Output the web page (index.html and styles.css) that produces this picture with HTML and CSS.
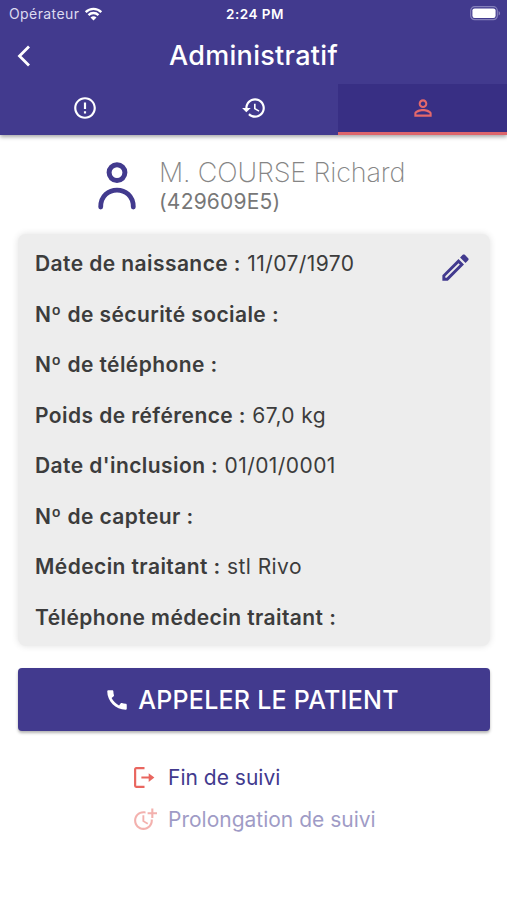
FILE: index.html
```html
<!DOCTYPE html>
<html lang="fr">
<head>
<meta charset="UTF-8">
<meta name="viewport" content="width=device-width, initial-scale=1.0">
<title>Administratif</title>
<link rel="stylesheet" href="styles.css">
</head>
<body>
  <header class="header">
    <div class="status-bar">
      <div class="carrier">
        <span class="carrier-name">Opérateur</span>
        <svg class="wifi" viewBox="0 0 18 14">
          <path d="M1.2 5.1a11 11 0 0 1 15.6 0M4 8.1a7 7 0 0 1 10 0" fill="none" stroke="#fff" stroke-width="2.3"/>
          <path d="M9 13.6L6 10.6a4.3 4.3 0 0 1 6 0z" fill="#fff"/>
        </svg>
      </div>
      <span class="time">2:24 PM</span>
      <svg class="battery" viewBox="0 0 31 15">
        <rect x=".7" y=".7" width="26.6" height="13" rx="4" fill="none" stroke="#8580bb" stroke-width="1.2"/>
        <rect x="2.4" y="2.4" width="23.2" height="9.6" rx="2.2" fill="#fff"/>
        <path d="M28.6 5v4.6c2-.9 2-3.7 0-4.6z" fill="#8580bb"/>
      </svg>
    </div>
    <div class="title-bar">
      <a href="#" class="back">
        <svg viewBox="0 0 14 22"><path d="M12 1.5L2.5 11l9.5 9.5" fill="none" stroke="#fff" stroke-width="2.8"/></svg>
      </a>
      <h1 class="title">Administratif</h1>
    </div>
    <nav class="tabs">
      <a href="#" class="tab">
        <svg viewBox="0 0 24 24"><path d="M11 15h2v2h-2zm0-8h2v6h-2zm.99-5C6.47 2 2 6.48 2 12s4.47 10 9.99 10C17.52 22 22 17.52 22 12S17.52 2 11.99 2zM12 20c-4.42 0-8-3.58-8-8s3.58-8 8-8 8 3.58 8 8-3.58 8-8 8z"/></svg>
      </a>
      <a href="#" class="tab">
        <svg viewBox="0 0 24 24"><path d="M13 3c-4.97 0-9 4.03-9 9H1l3.89 3.89.07.14L9 12H6c0-3.87 3.13-7 7-7s7 3.13 7 7-3.13 7-7 7c-1.93 0-3.68-.79-4.94-2.06l-1.42 1.42C8.27 19.99 10.51 21 13 21c4.97 0 9-4.03 9-9s-4.03-9-9-9zm-1 5v5l4.28 2.54.72-1.21-3.5-2.08V8H12z"/></svg>
      </a>
      <a href="#" class="tab active">
        <svg viewBox="0 0 24 24"><path d="M12 5.9c1.16 0 2.1.94 2.1 2.1s-.94 2.1-2.1 2.1S9.9 9.16 9.9 8s.94-2.1 2.1-2.1m0 9c2.97 0 6.1 1.46 6.1 2.1v1.1H5.9V17c0-.64 3.13-2.1 6.1-2.1M12 4C9.79 4 8 5.79 8 8s1.79 4 4 4 4-1.79 4-4-1.79-4-4-4zm0 9c-2.67 0-8 1.34-8 4v3h16v-3c0-2.66-5.33-4-8-4z"/></svg>
      </a>
    </nav>
  </header>

  <main class="content">
    <section class="patient">
      <svg class="avatar" viewBox="0 0 38 48" fill="none" stroke="#423a8e" stroke-linecap="round">
        <circle cx="19" cy="10.6" r="7.9" stroke-width="5"/>
        <path d="M2.7 45C2.7 22.5 35.3 22.5 35.3 45" stroke-width="4.8"/>
      </svg>
      <div>
        <div class="patient-name">M. COURSE Richard</div>
        <div class="patient-id">(429609E5)</div>
      </div>
    </section>

    <section class="card">
      <a href="#" class="edit">
        <svg viewBox="0 0 24 24"><path d="M14.06 9.02l.92.92L5.92 19H5v-.92l9.06-9.06M17.66 3c-.25 0-.51.1-.7.29l-1.83 1.83 3.75 3.75 1.83-1.83c.39-.39.39-1.02 0-1.41l-2.34-2.34c-.2-.2-.45-.29-.71-.29zm-3.6 3.19L3 17.25V21h3.75L17.81 9.94l-3.75-3.75z"/></svg>
      </a>
      <p class="row"><b>Date de naissance :</b> <span>11/07/1970</span></p>
      <p class="row"><b>Nº de sécurité sociale :</b></p>
      <p class="row"><b>Nº de téléphone :</b></p>
      <p class="row"><b>Poids de référence :</b> <span>67,0 kg</span></p>
      <p class="row"><b>Date d'inclusion :</b> <span>01/01/0001</span></p>
      <p class="row"><b>Nº de capteur :</b></p>
      <p class="row"><b>Médecin traitant :</b> <span>stl Rivo</span></p>
      <p class="row"><b>Téléphone médecin traitant :</b></p>
    </section>

    <button class="call-button">
      <svg viewBox="0 0 24 24"><path d="M20.01 15.38c-1.23 0-2.42-.2-3.53-.56-.35-.12-.74-.03-1.01.24l-1.57 1.97c-2.83-1.35-5.48-3.9-6.89-6.83l1.95-1.66c.27-.28.35-.67.24-1.02-.37-1.11-.56-2.3-.56-3.53 0-.54-.45-.99-.99-.99H4.19C3.65 3 3 3.24 3 3.99 3 13.28 10.73 21 20.01 21c.71 0 .99-.63.99-1.18v-3.45c0-.54-.45-.99-.99-.99z"/></svg>
      <span>APPELER LE PATIENT</span>
    </button>

    <div class="actions">
      <a href="#" class="action">
        <svg viewBox="0 0 24 24" fill="none" stroke="#e9665f" stroke-width="2.1">
          <path d="M12 3H4a1 1 0 0 0-1 1v16a1 1 0 0 0 1 1h8M9 12h8"/>
          <path d="M16 7.8l5.500 4.200-5.500 4.200z" fill="#e9665f" stroke="none"/>
        </svg>
        <span>Fin de suivi</span>
      </a>
      <a href="#" class="action disabled">
        <svg viewBox="0 0 24 24" fill="#e9665f"><path d="M10 8v6l4.700 2.900.9-1.500-3.800-2.300V8zM17.920 12c.05.330.08.660.08 1 0 3.900-3.100 7-7 7s-7-3.100-7-7 3.100-7 7-7c.7 0 1.370.1 2 .290V4.230C12.360 4.080 11.690 4 11 4c-5 0-9 4-9 9s4 9 9 9 9-4 9-9c0-.34-.02-.67-.06-1h-2.020zM20.500 5V1.500h-2V5H15v2h3.500v3.500h2V7H24V5z"/></svg>
        <span>Prolongation de suivi</span>
      </a>
    </div>
  </main>
</body>
</html>
```
FILE: styles.css
```css
* { box-sizing: border-box; }
body {
  margin: 0;
  background: #fff;
  color: #3c3c3c;
  font-family: Inter, "Liberation Sans", sans-serif;
}
a { color: inherit; text-decoration: none; }
svg { display: block; flex: none; }

/* header */
.header {
  height: 135px;
  background: #423a8e;
  color: #fff;
  box-shadow: 0 2px 4px rgba(0,0,0,0.35);
}
.status-bar {
  display: grid;
  grid-template-columns: 1fr auto 1fr;
  align-items: center;
  height: 27px;
  padding: 0 6px 0 9px;
  font-size: 14px;
}
.carrier { display: flex; align-items: center; gap: 5px; }
.carrier-name { color: #dddaf0; letter-spacing: 0.4px; }
.wifi { width: 19px; height: 14px; }
.time {
  font-weight: 600;
  font-size: 13.5px;
  letter-spacing: 0.5px;
}
.battery { width: 31px; height: 15px; justify-self: end; }
.title-bar {
  display: grid;
  grid-template-columns: 40px 1fr 40px;
  align-items: center;
  height: 57px;
}
.back { padding-left: 17px; }
.back svg { width: 14px; height: 22px; }
.title {
  margin: 0;
  font-size: 27px;
  font-weight: 500;
  letter-spacing: 0.3px;
  text-align: center;
}
.tabs { display: flex; height: 51px; }
.tab {
  flex: 1;
  display: flex;
  align-items: center;
  justify-content: center;
  border-bottom: 3px solid transparent;
}
.tab svg { width: 26px; height: 26px; fill: #fff; }
.tab.active { background: #382f84; border-bottom-color: #dc656c; }
.tab.active svg { fill: #e4686b; }

/* patient */
.content { padding: 0 17px 0 18px; }
.patient {
  display: flex;
  gap: 23px;
  height: 99px;
  padding: 23px 0 0 80px;
}
.avatar { width: 38px; height: 48px; margin-top: 4px; }
.patient-name {
  font-size: 27px;
  font-weight: 200;
  line-height: 30px;
  letter-spacing: -0.15px;
  color: #858585;
}
.patient-id {
  font-size: 21px;
  line-height: 28px;
  letter-spacing: 0.2px;
  color: #777;
}

/* details card */
.card {
  position: relative;
  height: 412px;
  padding: 5px 17px;
  background: #ededed;
  border-radius: 8px;
  box-shadow: 0 0 7px rgba(0,0,0,0.12);
}
.row {
  margin: 0;
  height: 50.5px;
  line-height: 50.5px;
  font-size: 21px;
  letter-spacing: 0.42px;
  white-space: nowrap;
}
.row b { font-weight: 600; }
.edit { position: absolute; top: 16px; right: 17px; }
.edit svg { width: 35px; height: 35px; fill: #423a8e; }

/* buttons */
.call-button {
  display: flex;
  align-items: center;
  justify-content: center;
  gap: 8px;
  width: 100%;
  height: 63px;
  margin-top: 22px;
  padding: 0 5px 0 0;
  border: none;
  border-radius: 4px;
  background: #423a8e;
  color: #fff;
  font-family: inherit;
  font-size: 25px;
  font-weight: 500;
  letter-spacing: 0.25px;
  box-shadow: 0 2px 3px rgba(0,0,0,0.3);
}
.call-button svg { width: 26px; height: 26px; fill: #fff; }
.actions { padding: 25px 0 0 114px; }
.action {
  display: flex;
  align-items: center;
  gap: 11px;
  height: 42.5px;
  font-size: 21px;
  color: #423a8e;
}
.action svg { width: 25px; height: 25px; }
.action.disabled { opacity: 0.5; }
```
